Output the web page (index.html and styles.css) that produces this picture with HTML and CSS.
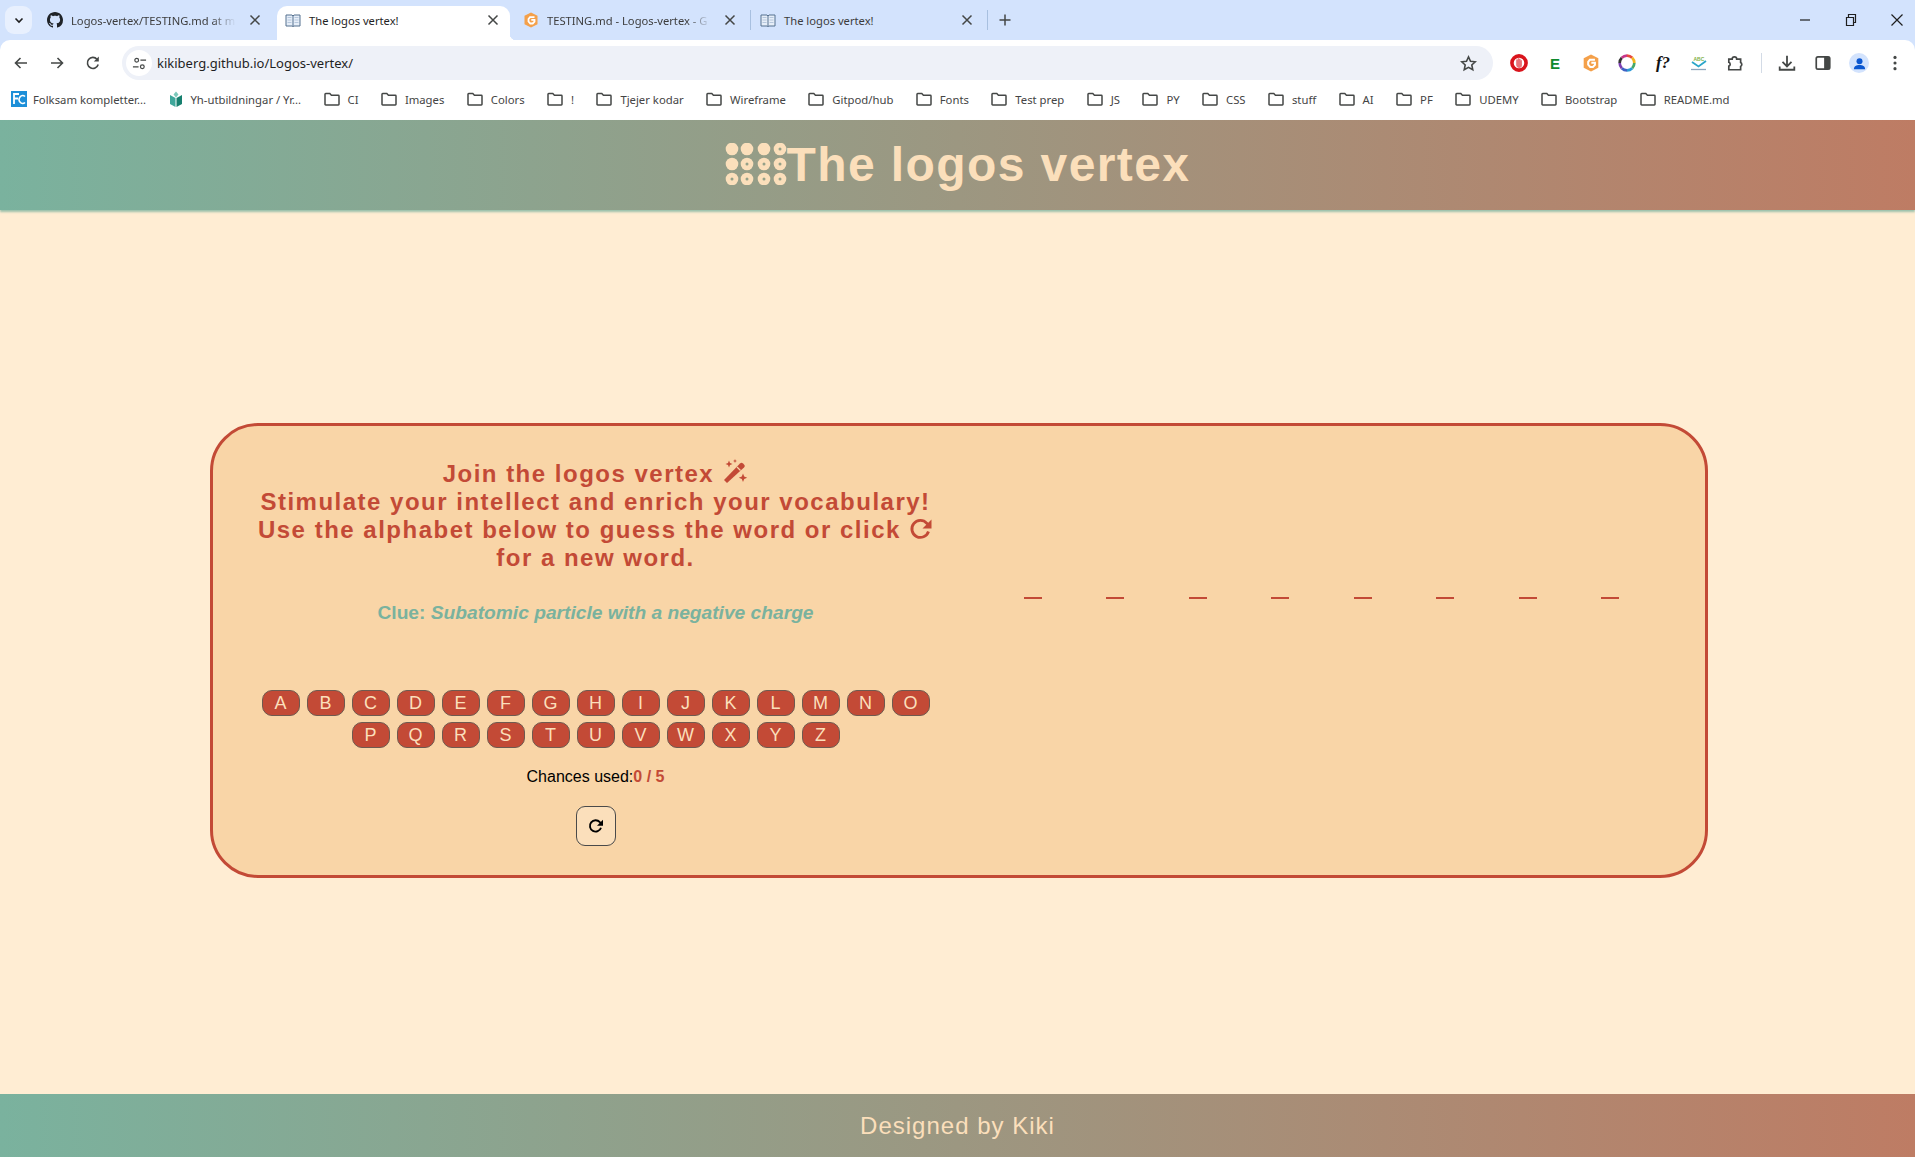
FILE: index.html
```html
<!DOCTYPE html>
<html lang="en">
<head>
<meta charset="utf-8">
<title>The logos vertex!</title>
<link rel="stylesheet" href="styles.css">
</head>
<body>
<svg class="defs" width="0" height="0" aria-hidden="true">
  <symbol id="folder" viewBox="0 0 16 16"><path d="M1 3.200c0-.4.3-.7.7-.7h4.100l1.600 1.700h6.900c.4 0 .7.3.7.7v8.400c0 .4-.3.7-.7.7H1.700c-.4 0-.7-.3-.7-.7z" fill="none" stroke="#444746" stroke-width="1.500"/></symbol>
  <symbol id="book" viewBox="0 0 16 16"><path d="M1 3h6l1 1 1-1h6v11H9l-1 .6L7 14H1z" fill="#e6eef8" stroke="#55708f" stroke-width="1"/><path d="M8 4v10" stroke="#55708f"/><path d="M2.500 5.500h4M2.500 8h4M2.500 10.500h4M9.500 5.500h4M9.500 8h4M9.500 10.500h4" stroke="#a9bdd6" stroke-width=".8"/></symbol>
  <symbol id="close" viewBox="0 0 16 16"><path d="M3.500 3.500l9 9M12.500 3.500l-9 9" fill="none" stroke="#444746" stroke-width="1.500"/></symbol>
  <symbol id="redo" viewBox="0 0 24 24"><path d="M19.500 14.500A8.500 8.500 0 1 1 17.800 6.300L21 9.400" fill="none" stroke="currentColor" stroke-width="2.800"/><path d="M22.500 2.500v9h-9z" fill="currentColor"/></symbol>
</svg>

<div class="browser">
  <div class="tabstrip">
    <div class="tablist-btn"><svg width="12" height="12" viewBox="0 0 12 12"><path d="M2.500 4.500L6 8l3.500-3.500" fill="none" stroke="#1f1f1f" stroke-width="1.600"/></svg></div>
    <div class="tab tab-first">
      <svg class="fav" viewBox="0 0 16 16"><path fill="#1f2328" d="M8 0C3.580 0 0 3.580 0 8c0 3.540 2.290 6.530 5.470 7.590.4.070.55-.17.55-.38 0-.19-.01-.82-.01-1.490-2.010.37-2.530-.49-2.690-.94-.09-.23-.48-.94-.82-1.130-.28-.15-.68-.52-.01-.53.630-.01 1.080.580 1.230.820.720 1.210 1.870.870 2.330.660.070-.520.280-.870.510-1.070-1.780-.200-3.640-.890-3.640-3.950 0-.870.310-1.590.820-2.150-.080-.200-.360-1.020.080-2.120 0 0 .670-.210 2.200.820.640-.180 1.320-.270 2-.270s1.360.090 2 .270c1.530-1.040 2.200-.820 2.200-.820.440 1.100.160 1.920.080 2.120.510.560.820 1.270.820 2.150 0 3.070-1.870 3.750-3.650 3.950.290.250.540.730.540 1.480 0 1.070-.010 1.930-.010 2.200 0 .210.150.460.550.380A8.010 8.010 0 0 0 16 8c0-4.420-3.580-8-8-8z"/></svg>
      <span class="tab-title tab-fade">Logos-vertex/TESTING.md at m</span>
      <svg class="tab-close"><use href="#close"/></svg>
    </div>
    <div class="tab tab-active">
      <svg class="fav"><use href="#book"/></svg>
      <span class="tab-title">The logos vertex!</span>
      <svg class="tab-close"><use href="#close"/></svg>
    </div>
    <div class="tab tab-sep">
      <svg class="fav" viewBox="0 0 16 16"><path d="M8 .5l6.500 3.200v8.600L8 15.500l-6.500-3.200V3.700z" fill="#f4a04a"/><path d="M11.500 5.200H7L5.500 7v2.500L7.300 11.500h2.400l1.800-1.800V7.800H8.300" fill="none" stroke="#fff" stroke-width="1.800"/></svg>
      <span class="tab-title tab-fade">TESTING.md - Logos-vertex - G</span>
      <svg class="tab-close"><use href="#close"/></svg>
    </div>
    <div class="tab tab-sep">
      <svg class="fav"><use href="#book"/></svg>
      <span class="tab-title">The logos vertex!</span>
      <svg class="tab-close"><use href="#close"/></svg>
    </div>
    <svg class="newtab" viewBox="0 0 16 16"><path d="M8 2.500v11M2.500 8h11" stroke="#444746" stroke-width="1.500"/></svg>
    <div class="winbtns">
      <svg viewBox="0 0 16 16"><path d="M3 8h10" stroke="#1f1f1f" stroke-width="1.200"/></svg>
      <svg viewBox="0 0 16 16"><path d="M3.500 5.500h7v8h-7zM5.500 5.500v-3h7v8h-2" fill="none" stroke="#1f1f1f" stroke-width="1.200"/></svg>
      <svg viewBox="0 0 16 16"><path d="M2.500 2.500l11 11M13.500 2.500l-11 11" stroke="#1f1f1f" stroke-width="1.200"/></svg>
    </div>
  </div>

  <div class="toolbar">
    <div class="nav">
      <svg viewBox="0 0 16 16"><path d="M14 8H3M7.500 3L2.500 8l5 5" fill="none" stroke="#444746" stroke-width="1.600"/></svg>
      <svg viewBox="0 0 16 16"><path d="M2 8h11M8.500 3l5 5-5 5" fill="none" stroke="#444746" stroke-width="1.600"/></svg>
      <svg viewBox="0 0 16 16"><path d="M13.200 9.500A5.500 5.500 0 1 1 12 4.200" fill="none" stroke="#444746" stroke-width="1.600"/><path d="M13.800 1.500v5h-5z" fill="#444746"/></svg>
    </div>
    <div class="omnibox">
      <span class="site-info"><svg viewBox="0 0 16 16"><circle cx="5" cy="4.500" r="2" fill="none" stroke="#444746" stroke-width="1.300"/><path d="M9 4.500h6M1 11.500h6" stroke="#444746" stroke-width="1.300"/><circle cx="11" cy="11.500" r="2" fill="none" stroke="#444746" stroke-width="1.300"/></svg></span>
      <span class="url">kikiberg.github.io/Logos-vertex/</span>
      <svg class="star" viewBox="0 0 16 16"><path d="M8 1.800l1.900 4.100 4.500.5-3.300 3 .9 4.400L8 11.600l-4 2.200.9-4.400-3.300-3 4.500-.5z" fill="none" stroke="#444746" stroke-width="1.500"/></svg>
    </div>
    <div class="exts">
      <svg viewBox="0 0 16 16"><circle cx="8" cy="8" r="6.300" fill="#fff" stroke="#d9141c" stroke-width="3.200"/><path d="M5.500 7.500V5a.7.700 0 0 1 1.300 0V4a.7.700 0 0 1 1.300 0v.5a.7.700 0 0 1 1.300 0V6a.6.600 0 0 1 1.200 0v4c0 1.500-1 2.500-2.400 2.500S6 11.500 5.500 10z" fill="#e8747a"/></svg>
      <span class="ext-e">E</span>
      <svg viewBox="0 0 16 16"><path d="M8 .5l6.500 3.200v8.600L8 15.500l-6.500-3.200V3.700z" fill="#f4a04a"/><path d="M11.500 5.200H7L5.500 7v2.500L7.300 11.500h2.400l1.800-1.800V7.800H8.300" fill="none" stroke="#fff" stroke-width="1.800"/></svg>
      <svg viewBox="0 0 16 16"><g fill="none" stroke-width="2.400"><path d="M8 1.500a6.500 6.500 0 0 1 4.600 1.900" stroke="#e94b3c"/><path d="M12.600 3.400A6.500 6.500 0 0 1 14.500 8" stroke="#f2b51d"/><path d="M14.500 8a6.500 6.500 0 0 1-1.900 4.600" stroke="#48a868"/><path d="M12.600 12.600A6.500 6.500 0 0 1 8 14.500" stroke="#2c9ad6"/><path d="M8 14.500a6.500 6.500 0 0 1-4.600-1.900" stroke="#3f62c4"/><path d="M3.400 12.600A6.500 6.500 0 0 1 1.500 8" stroke="#7b3fb0"/><path d="M1.500 8a6.500 6.500 0 0 1 1.900-4.600" stroke="#333"/><path d="M3.400 3.400A6.500 6.500 0 0 1 8 1.500" stroke="#c7368a"/></g></svg>
      <span class="ext-font">f?</span>
      <svg viewBox="0 0 18 16"><text x="3.500" y="5.500" class="ext-abc">ABC</text><path d="M2 7l6.500 4.500L16 6" fill="none" stroke="#2aa6c9" stroke-width="1.800"/><path d="M1 14.500h15" stroke="#8fa6bd" stroke-width="1.300"/></svg>
      <svg viewBox="0 0 16 16"><path d="M2.500 4.500h3a2 2 0 0 1 4 0h3.500v3a2 2 0 0 1 0 3.500v3H2.500v-3.200a1.800 1.800 0 0 0 0-3.400z" fill="none" stroke="#444746" stroke-width="1.500"/></svg>
      <i class="ext-sep"></i>
      <svg viewBox="0 0 16 16"><path d="M8 1.500v9M4 7l4 4 4-4M1.500 11v3h13v-3" fill="none" stroke="#444746" stroke-width="1.600"/></svg>
      <svg viewBox="0 0 16 16"><rect x="2" y="2.500" width="12" height="11" rx="1.500" fill="none" stroke="#444746" stroke-width="1.500"/><path d="M9 2.500h5v11H9z" fill="#444746"/></svg>
      <span class="avatar"><svg viewBox="0 0 16 16"><circle cx="8" cy="5.500" r="3.200" fill="#0b57d0"/><path d="M2 14c0-3.300 2.700-4.500 6-4.500s6 1.200 6 4.500z" fill="#0b57d0"/></svg></span>
      <svg viewBox="0 0 16 16"><circle cx="8" cy="3" r="1.400" fill="#444746"/><circle cx="8" cy="8" r="1.400" fill="#444746"/><circle cx="8" cy="13" r="1.400" fill="#444746"/></svg>
    </div>
  </div>

  <div class="bookmarks">
    <span class="bm bm-site"><svg viewBox="0 0 16 16"><path d="M0 0h16v16H0z" fill="#1c8fd8"/><path d="M3 13V3h5M3 7.500h4" fill="none" stroke="#fff" stroke-width="1.800"/><path d="M14 5.500a3.500 4 0 1 0 0 6" fill="none" stroke="#fff" stroke-width="1.600"/></svg>Folksam kompletter...</span>
    <span class="bm bm-site"><svg viewBox="0 0 16 16"><path d="M2 4l5.500 3v9L2 13z" fill="#3fa79b"/><path d="M14 4L8.500 7v9l5.500-3z" fill="#17806f"/><path d="M8 0.500l2.500 3L8 6.500 5.500 3.500z" fill="#7cc8bb"/></svg>Yh-utbildningar / Yr...</span>
    <span class="bm"><svg><use href="#folder"/></svg>CI</span>
    <span class="bm"><svg><use href="#folder"/></svg>Images</span>
    <span class="bm"><svg><use href="#folder"/></svg>Colors</span>
    <span class="bm"><svg><use href="#folder"/></svg>!</span>
    <span class="bm"><svg><use href="#folder"/></svg>Tjejer kodar</span>
    <span class="bm"><svg><use href="#folder"/></svg>Wireframe</span>
    <span class="bm"><svg><use href="#folder"/></svg>Gitpod/hub</span>
    <span class="bm"><svg><use href="#folder"/></svg>Fonts</span>
    <span class="bm"><svg><use href="#folder"/></svg>Test prep</span>
    <span class="bm"><svg><use href="#folder"/></svg>JS</span>
    <span class="bm"><svg><use href="#folder"/></svg>PY</span>
    <span class="bm"><svg><use href="#folder"/></svg>CSS</span>
    <span class="bm"><svg><use href="#folder"/></svg>stuff</span>
    <span class="bm"><svg><use href="#folder"/></svg>AI</span>
    <span class="bm"><svg><use href="#folder"/></svg>PF</span>
    <span class="bm"><svg><use href="#folder"/></svg>UDEMY</span>
    <span class="bm"><svg><use href="#folder"/></svg>Bootstrap</span>
    <span class="bm"><svg><use href="#folder"/></svg>README.md</span>
  </div>
</div>

<header class="site-header">
  <svg class="logo" viewBox="0 0 62 42">
    <g fill="#fbdfbb">
      <circle cx="7" cy="6" r="6.300"/><circle cx="22" cy="6" r="6.300"/><circle cx="39" cy="6" r="6.300"/><circle cx="55" cy="6" r="6.300"/>
      <circle cx="7" cy="21" r="6.300"/><circle cx="22" cy="21" r="6.300"/><circle cx="39" cy="21" r="6.300"/><circle cx="55" cy="21" r="6.300"/>
      <circle cx="7" cy="36" r="6.300"/><circle cx="22" cy="36" r="6.300"/><circle cx="39" cy="36" r="6.300"/><circle cx="55" cy="36" r="6.300"/>
    </g>
    <g fill="#94a088">
      <circle cx="55" cy="6" r="1.500"/>
      <circle cx="22" cy="21" r="1.500"/><circle cx="39" cy="21" r="1.500"/><circle cx="55" cy="21" r="1.500"/>
      <circle cx="7" cy="36" r="1.500"/><circle cx="22" cy="36" r="1.500"/><circle cx="39" cy="36" r="1.500"/><circle cx="55" cy="36" r="1.500"/>
    </g>
  </svg>
  <h1 class="site-title">The logos vertex</h1>
</header>

<main class="stage">
  <section class="card">
    <div class="panel">
      <h2 class="intro">Join the logos vertex <svg class="wand" viewBox="0 0 26 26"><path d="M5 24l-3-3L18 4.500c1-1 2-1 3 0l1 1c1 1 1 2 0 3z" fill="currentColor"/><path d="M15 8l3.500 3.500" stroke="#f9d5a7" stroke-width="1.200"/><path d="M7 1.500l1 2.500 2.500 1-2.500 1-1 2.500-1-2.500L3.500 5l2.500-1zM13 0l.6 1.400 1.400.6-1.400.6L13 4l-.6-1.400L11 2l1.400-.6zM21 14.500l1.200 3 3 1.200-3 1.200-1.200 3-1.200-3-3-1.200 3-1.200z" fill="currentColor"/></svg><br>Stimulate your intellect and enrich your vocabulary!<br>Use the alphabet below to guess the word or click <svg class="redo"><use href="#redo"/></svg> for a new word.</h2>
      <p class="clue"><b>Clue:</b> <i>Subatomic particle with a negative charge</i></p>
      <div class="keys">
        <button class="key">A</button><button class="key">B</button><button class="key">C</button><button class="key">D</button><button class="key">E</button><button class="key">F</button><button class="key">G</button><button class="key">H</button><button class="key">I</button><button class="key">J</button><button class="key">K</button><button class="key">L</button><button class="key">M</button><button class="key">N</button><button class="key">O</button><button class="key">P</button><button class="key">Q</button><button class="key">R</button><button class="key">S</button><button class="key">T</button><button class="key">U</button><button class="key">V</button><button class="key">W</button><button class="key">X</button><button class="key">Y</button><button class="key">Z</button>
      </div>
      <p class="chances">Chances used:<b>0 / 5</b></p>
      <button class="reset"><svg class="reset-icon"><use href="#redo"/></svg></button>
    </div>
    <div class="word">
      <span class="slot"></span><span class="slot"></span><span class="slot"></span><span class="slot"></span><span class="slot"></span><span class="slot"></span><span class="slot"></span><span class="slot"></span>
    </div>
  </section>
</main>

<footer class="site-footer">Designed by Kiki</footer>
</body>
</html>
```
FILE: styles.css
```css
* { box-sizing: border-box; }
html, body { margin: 0; height: 100%; }
body {
  display: flex;
  flex-direction: column;
  height: 1157px;
  overflow: hidden;
  background: #ffedd3;
  font-family: "Liberation Sans", Arial, sans-serif;
}
.defs { position: absolute; }

/* browser chrome */
.browser { flex: none; height: 120px; background: #d3e3fd; font-family: "Noto Sans", "Open Sans", sans-serif; color: #3c3c3c; }
.tabstrip { display: flex; align-items: flex-end; height: 40px; padding-left: 5px; }
.tablist-btn { width: 27px; height: 28px; margin: 0 7px 6px 0; border-radius: 9px; background: #e8f0fe; display: flex; align-items: center; justify-content: center; }
.tab { position: relative; display: flex; align-items: center; height: 34px; width: 237px; padding: 0 14px 6px 8px; font-size: 11.200px; }
.tab-first { width: 238px; }
.tab-active { width: 233px; margin-right: 5px; padding-right: 9px; background: #fff; border-radius: 10px 10px 0 0; color: #1f1f1f; }
.tab-active::after { content: ""; position: absolute; right: -6px; bottom: 0; width: 6px; height: 6px; background: radial-gradient(circle at 100% 0, transparent 6px, #fff 6.500px); }
.tab-sep::after { content: ""; position: absolute; right: 1px; top: 4px; height: 20px; width: 1px; background: #a8c0e0; }
.fav { flex: none; width: 16px; height: 16px; margin-right: 8px; }
.tab-title { flex: 1; min-width: 0; white-space: nowrap; margin-right: 11px; }
.tab-fade { -webkit-mask-image: linear-gradient(90deg, #000 85%, transparent); mask-image: linear-gradient(90deg, #000 85%, transparent); }
.tab-close { flex: none; width: 16px; height: 16px; }
.newtab { width: 16px; height: 16px; margin: 0 0 12px 8px; }
.winbtns { display: flex; gap: 30px; margin: 0 10px 12px auto; }
.winbtns svg { width: 16px; height: 16px; }

.toolbar { display: flex; align-items: center; height: 40px; padding: 6px 10px 0 13px; background: #fff; border-radius: 10px 10px 0 0; }
.nav { display: flex; gap: 20px; margin-right: 21px; }
.nav svg { width: 16px; height: 16px; }
.omnibox { display: flex; align-items: center; width: 1371px; height: 34px; padding: 0 16px 0 4px; border-radius: 17px; background: #eef1f8; }
.site-info { width: 26px; height: 26px; border-radius: 50%; background: #fff; display: flex; align-items: center; justify-content: center; margin-right: 5px; }
.site-info svg { width: 15px; height: 15px; }
.url { flex: 1; font-size: 13px; color: #1f1f1f; }
.star { width: 17px; height: 17px; }
.exts { display: flex; align-items: center; gap: 18px; margin-left: 17px; }
.exts > svg { width: 18px; height: 18px; flex: none; }
.ext-e { width: 18px; text-align: center; font: 700 15px "Liberation Sans", sans-serif; color: #0f8a2e; }
.ext-abc { font: 700 5px "Liberation Sans", sans-serif; fill: #7fb24a; }
.ext-font { width: 18px; text-align: center; font: italic 700 17px "Liberation Serif", serif; color: #111; }
.ext-sep { width: 1px; height: 20px; margin: 0 -2px 0 -1px; background: #d3dbe6; }
.avatar { width: 20px; height: 20px; margin: 0 -1px; border-radius: 50%; background: #d3e3fd; display: flex; align-items: center; justify-content: center; }
.avatar svg { width: 15px; height: 15px; }

.bookmarks { display: flex; align-items: center; gap: 22.400px; height: 40px; padding: 0 0 2px 11px; background: #fff; font-size: 11.300px; color: #444; white-space: nowrap; }
.bm { display: flex; align-items: center; gap: 8px; }
.bm-site { gap: 6px; }
.bm svg { flex: none; width: 16px; height: 16px; }

/* site */
.site-header {
  flex: none;
  display: flex;
  align-items: center;
  justify-content: center;
  height: 90px;
  padding-bottom: 2px;
  background: linear-gradient(90deg, #7ab29e, #be7c64);
  box-shadow: 0 2px 2px rgba(122, 178, 158, .75);
  position: relative;
}
.logo { width: 62px; height: 42px; }
.site-title { margin: 0; font-size: 48px; font-weight: 700; letter-spacing: 1.400px; color: #fbdfbb; }

.stage { flex: 1; display: flex; align-items: center; justify-content: center; padding-bottom: 4px; }
.card {
  display: grid;
  grid-template-columns: 690px 690px;
  column-gap: 36px;
  width: 1498px;
  margin-left: 2px;
  padding: 33px 38px 29px;
  background: #f9d5a7;
  border: 3px solid #c34a36;
  border-radius: 48px;
}
.panel { display: flex; flex-direction: column; align-items: center; text-align: center; }
.intro { margin: 0; font-size: 24px; line-height: 28px; font-weight: 700; letter-spacing: 1.500px; color: #c34a36; }
.wand { width: 26px; height: 26px; vertical-align: -3px; color: #c34a36; }
.redo { width: 24px; height: 24px; vertical-align: -3px; color: #c34a36; }
.clue { margin: 29px 0 0; font-size: 19.200px; line-height: 23px; color: #7ab29e; font-weight: 700; }
.keys { display: flex; flex-wrap: wrap; justify-content: center; gap: 6px 7px; margin-top: 66px; }
.key {
  width: 38px;
  height: 26px;
  padding: 0;
  border: 1px solid #6e5a50;
  border-radius: 10px;
  background: #c34a36;
  color: #fbdfbb;
  font: 18px/1 "Liberation Sans", Arial, sans-serif;
}
.chances { margin: 20px 0 0; font-size: 16px; line-height: 18px; color: #000; }
.chances b { color: #c34a36; }
.reset { display: flex; align-items: center; justify-content: center; width: 40px; height: 40px; margin-top: 20px; padding: 0; border: 1px solid #4a4a4a; border-radius: 9px; background: #fbdfbb; color: #000; }
.reset-icon { width: 16px; height: 16px; }
.word { display: flex; justify-content: center; gap: 64.500px; padding-top: 138px; align-items: flex-start; }
.slot { width: 18px; height: 2px; background: #c34a36; }

.site-footer {
  flex: none;
  height: 63px;
  display: flex;
  align-items: center;
  justify-content: center;
  background: linear-gradient(90deg, #7ab29e, #be7c64);
  color: #fbdfbb;
  font-size: 24px;
  letter-spacing: 1px;
}
```
